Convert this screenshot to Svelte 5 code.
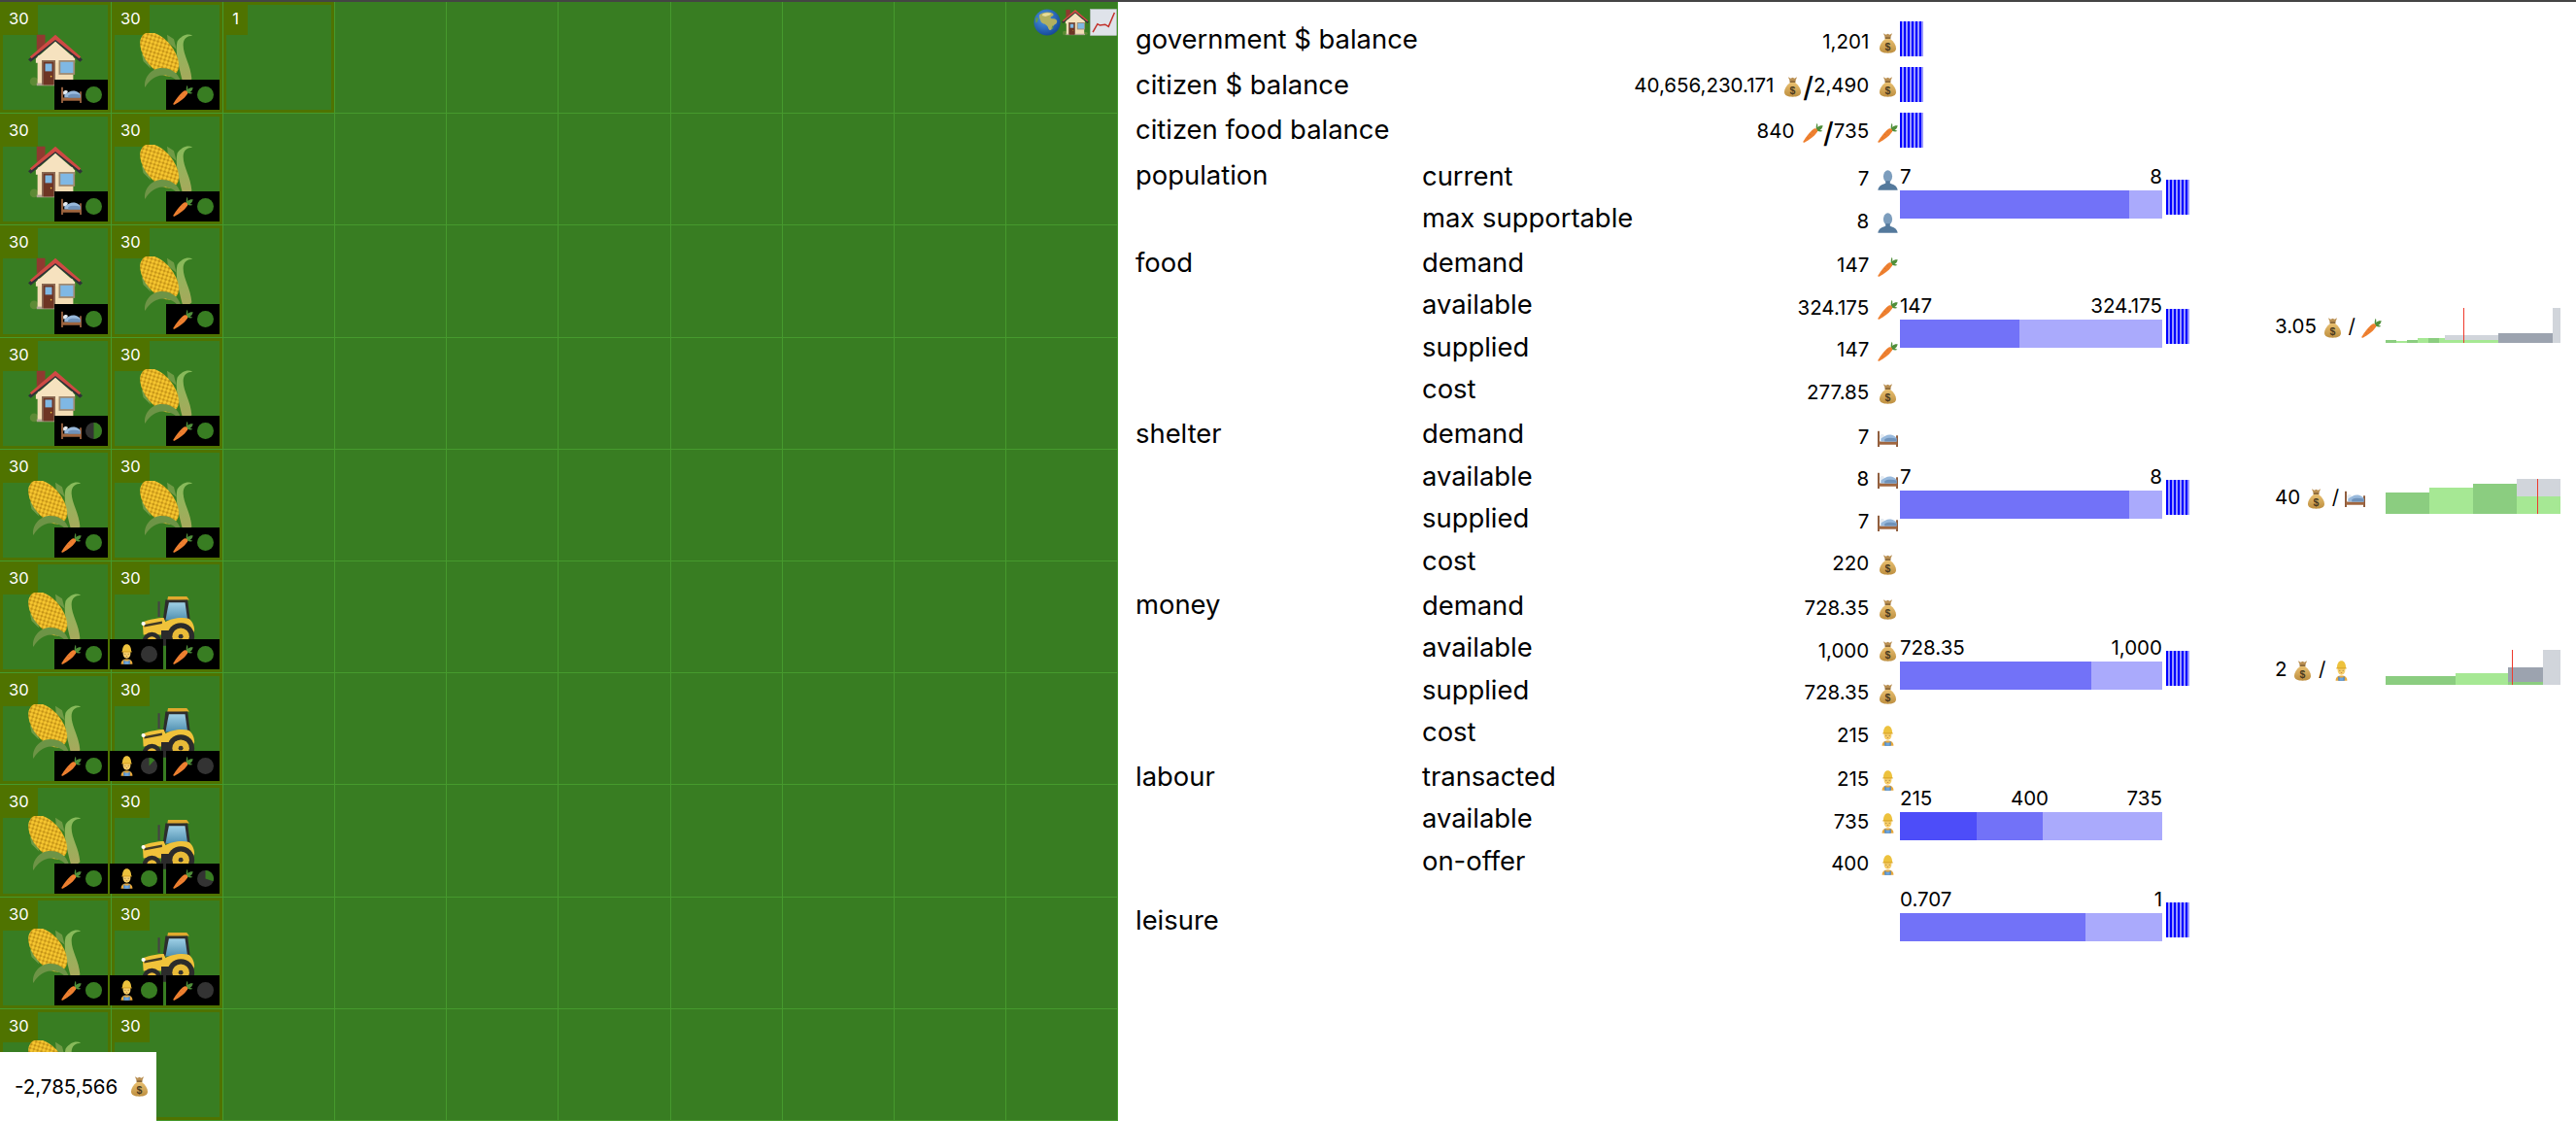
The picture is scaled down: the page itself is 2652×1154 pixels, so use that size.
<script>
	const B = (kind, chips, n = '30') => ({ kind, chips, n });
	const rows = [
		[B('house', [['bed', 1]]), B('corn', [['carrot', 1]]), { kind: '', chips: [], n: '1' }],
		[B('house', [['bed', 1]]), B('corn', [['carrot', 1]])],
		[B('house', [['bed', 1]]), B('corn', [['carrot', 1]])],
		[B('house', [['bed', 0.5]]), B('corn', [['carrot', 1]])],
		[B('corn', [['carrot', 1]]), B('corn', [['carrot', 1]])],
		[B('corn', [['carrot', 1]]), B('tractor', [['worker', 0], ['carrot', 1]])],
		[B('corn', [['carrot', 1]]), B('tractor', [['worker', 0.12], ['carrot', 0]])],
		[B('corn', [['carrot', 1]]), B('tractor', [['worker', 1], ['carrot', 0.3]])],
		[B('corn', [['carrot', 1]]), B('tractor', [['worker', 1], ['carrot', 0]])],
		[B('corn', []), { kind: '', chips: [], n: '30' }]
	];

	const cells = [];
	for (let r = 0; r < 10; r++) {
		for (let c = 0; c < 10; c++) {
			cells.push(rows[r][c] || null);
		}
	}

	// pie wedge from 12 o'clock, clockwise
	function wedge(p) {
		const a = p * Math.PI * 2;
		const x = 50 + 50 * Math.sin(a);
		const y = 50 - 50 * Math.cos(a);
		return `M50 50L50 0A50 50 0 ${p > 0.5 ? 1 : 0} 1 ${x} ${y}Z`;
	}

	const G1 = '#8bcd80';
	const G2 = '#a6e894';
	const GY = '#d1d5db';
	const DK = '#9ca3af';

	const foodChart = {
		rects: [
			[0, 11, 3, G1], [11, 11, 2, G2], [22, 11, 3, G1], [33, 11, 5, G2], [44, 11, 5, G1], [55, 6, 5, G2],
			[61, 55, 8, GY], [61, 55, 3, G2], [116, 56, 10, DK], [172, 8, 36, GY]
		],
		line: 80
	};
	const shelterChart = {
		rects: [
			[0, 45, 22, G1], [45, 45, 27, G2], [90, 45, 31, G1], [135, 45, 36, GY], [135, 45, 18, G2]
		],
		line: 156
	};
	const moneyChart = {
		rects: [
			[0, 72, 9, G1], [72, 54, 12, G2], [126, 36, 18, DK], [126, 36, 3, G1], [162, 18, 36, GY]
		],
		line: 130
	};

	const groups = [
		{ label: 'population', rows: [['current', '7', 'person'], ['max supportable', '8', 'person']], bar: { segs: [[87.5, '#7272f8']], labels: ['7', '8'] }, spark: true },
		{ label: 'food', rows: [['demand', '147', 'carrot'], ['available', '324.175', 'carrot'], ['supplied', '147', 'carrot'], ['cost', '277.85', 'bag']], bar: { segs: [[45.4, '#7272f8']], labels: ['147', '324.175'] }, spark: true, price: ['3.05', 'carrot'], chart: foodChart },
		{ label: 'shelter', rows: [['demand', '7', 'bed'], ['available', '8', 'bed'], ['supplied', '7', 'bed'], ['cost', '220', 'bag']], bar: { segs: [[87.5, '#7272f8']], labels: ['7', '8'] }, spark: true, price: ['40', 'bed'], chart: shelterChart },
		{ label: 'money', rows: [['demand', '728.35', 'bag'], ['available', '1,000', 'bag'], ['supplied', '728.35', 'bag'], ['cost', '215', 'worker']], bar: { segs: [[72.9, '#7272f8']], labels: ['728.35', '1,000'] }, spark: true, price: ['2', 'worker'], chart: moneyChart },
		{ label: 'labour', rows: [['transacted', '215', 'worker'], ['available', '735', 'worker'], ['on-offer', '400', 'worker']], bar: { segs: [[29.3, '#4d4df9'], [25.2, '#7272f8']], labels: ['215', '400', '735'] } },
		{ label: 'leisure', rows: [['', '', '']], bar: { segs: [[70.7, '#7272f8']], labels: ['0.707', '1'] }, spark: true, tall: true }
	];
</script>

{#snippet icon(name, cls = '')}
	<svg class="icon {cls}" viewBox="0 0 64 64"><use href="#i-{name}" /></svg>
{/snippet}

<svg class="defs" width="0" height="0" aria-hidden="true">
	<defs>
		<linearGradient id="bagg" x1="0" y1="0" x2="0" y2="1"><stop offset="0" stop-color="#e8bf70" /><stop offset="1" stop-color="#bd8f40" /></linearGradient>
		<radialGradient id="globeg" cx="0.4" cy="0.35" r="0.75"><stop offset="0" stop-color="#4f9be8" /><stop offset="1" stop-color="#0f3f8f" /></radialGradient>
		<linearGradient id="cabg" x1="0" y1="0" x2="0" y2="1"><stop offset="0" stop-color="#9fd0e6" /><stop offset="1" stop-color="#4f8fb0" /></linearGradient>
		<linearGradient id="huskg" x1="0" y1="0" x2="0" y2="1"><stop offset="0" stop-color="#86bb5a" /><stop offset="1" stop-color="#a8a85c" /></linearGradient>
		<pattern id="kern" width="4.6" height="4.6" patternUnits="userSpaceOnUse" patternTransform="rotate(-35)">
			<rect width="4.6" height="4.6" fill="#c08e14" />
			<circle cx="2.3" cy="2.3" r="2.1" fill="#f6c630" />
		</pattern>
		<symbol id="i-house" viewBox="0 0 64 64">
			<ellipse cx="7" cy="57" rx="5" ry="5" fill="#5d8a35" />
			<ellipse cx="56" cy="58" rx="5" ry="3" fill="#5d8a35" />
			<rect x="10" y="2" width="10" height="18" fill="#8f3a30" />
			<rect x="11" y="26" width="42" height="34" fill="#f3dcb4" />
			<rect x="10" y="59" width="45" height="3" fill="#b3a594" />
			<path d="M0 31 32 4l32 27-3 3L32 10 3 34Z" fill="#2f3238" />
			<path d="M2 28 32 2l30 26-2 2L32 8 4 30Z" fill="#cf4a44" />
			<path d="M9 30 32 10l23 20v5H9Z" fill="#f6e2bf" />
			<rect x="16" y="32" width="16" height="29" fill="#8a6a54" />
			<rect x="18" y="34" width="12" height="27" fill="#6e3524" />
			<rect x="20" y="36" width="8" height="9" fill="#7fb8e4" />
			<rect x="36" y="32" width="19" height="17" fill="#a08a70" />
			<rect x="38" y="34" width="15" height="13" fill="#7fb8e4" />
			<circle cx="27" cy="51" r="0.9" fill="#f0c040" />
		</symbol>
		<symbol id="i-corn" viewBox="0 0 64 64">
			<path d="M32 2l8 5 3 12-10-8Z" fill="#6f9a45" />
			<path d="M2 24l7 5 4 13-9-9Z" fill="#6f9a45" />
			<path d="M44 10c5-7 12-10 18-7-6 0-11 3-11 11 0 12 9 24 10 40-3 3-7 4-11 2C46 40 41 22 44 10Z" fill="url(#huskg)" />
			<ellipse cx="23" cy="25" rx="17" ry="30" transform="rotate(-38 23 25)" fill="url(#kern)" />
			<path d="M6 64c-2-11 7-23 20-23 10 0 19 5 22 16l-3 1c-6-8-17-10-25-7-7 3-11 8-14 13Z" fill="#6d9446" />
		</symbol>
		<symbol id="i-tractor" viewBox="0 0 64 64">
			<rect x="20" y="6" width="2.5" height="18" fill="#444" />
			<path d="M32 0h22l3 4-26 1Z" fill="#e0a92e" />
			<path d="M29 4h26l3 24H26Z" fill="#2d2d2d" />
			<path d="M33 7h19l3 21H29Z" fill="url(#cabg)" />
			<path d="M2 30c8-3 18-5 25-5l2 5c6-4 18-6 27-4 4 2 7 8 7 14l-2 5H3Z" fill="#f0c23a" />
			<path d="M4 33l21-4v3L4 36Z" fill="#403a26" />
			<circle cx="3" cy="32" r="2.4" fill="#fff" />
			<rect x="24" y="40" width="16" height="18" fill="#2b2b2b" />
			<circle cx="47" cy="47" r="16" fill="#2b2b2b" />
			<circle cx="47" cy="47" r="10" fill="#e9bb38" />
			<circle cx="47" cy="47" r="2.8" fill="#333" />
			<circle cx="13" cy="53" r="11" fill="#2b2b2b" />
			<circle cx="13" cy="53" r="6" fill="#e9bb38" />
			<circle cx="13" cy="53" r="2" fill="#333" />
		</symbol>
		<symbol id="i-bed" viewBox="0 0 64 64">
			<rect x="0" y="8" width="6" height="50" rx="1" fill="#8f5c3c" />
			<rect x="58" y="22" width="6" height="36" rx="1" fill="#8f5c3c" />
			<rect x="3" y="41" width="58" height="10" fill="#a0663f" />
			<path d="M6 24c3-6 11-7 15-3l-3 9-11 2Z" fill="#e6ebf1" />
			<path d="M10 41V32c11-8 21-14 32-12 10 2 17 7 18 13v8Z" fill="#98b9dc" />
			<path d="M22 41V34c8-5 25-6 38-1v8Z" fill="#6f92ba" />
		</symbol>
		<symbol id="i-carrot" viewBox="0 0 64 64">
			<path d="M45 2c2 3 2 9 1 13 4-4 11-6 17-5-1 7-5 12-10 14 3 0 7 1 9 3-3 3-10 3-16 0-6-4-5-18-1-25Z" fill="#4f8f3a" />
			<path d="M37 19c6-1 10 3 9 9C42 38 21 55 5 63c-3 1-4-1-4-3C11 44 27 23 37 19Z" fill="#ee8030" />
			<path d="M21 37l5 3M29 28l4 3M14 48l4 2" stroke="#c96420" stroke-width="1.4" fill="none" />
		</symbol>
		<symbol id="i-bag" viewBox="0 0 64 64">
			<path d="M18 1l8 4 6-3 6 3 8-4-6 14H24Z" fill="#b98f52" />
			<rect x="23" y="13" width="18" height="5" rx="1" fill="#8c6a3a" />
			<path d="M24 18h16c11 9 18 20 18 30 0 11-11 15-26 15S6 59 6 48c0-10 7-21 18-30Z" fill="url(#bagg)" />
			<text x="32" y="54" text-anchor="middle" font-family="Liberation Sans" font-size="32" font-weight="700" fill="#4a3a20">$</text>
		</symbol>
		<symbol id="i-person" viewBox="0 0 64 64">
			<ellipse cx="32" cy="20" rx="14" ry="19" fill="#7c9dbd" />
			<path d="M25 34h14v8c11 3 22 8 24 21H1c2-13 13-18 24-21Z" fill="#54799c" />
		</symbol>
		<symbol id="i-worker" viewBox="0 0 64 64">
			<path d="M14 63c0-10 5-16 18-16s18 6 18 16Z" fill="#e8a93c" />
			<path d="M22 63V50h4v4h12v-4h4v13Z" fill="#4d86c4" />
			<rect x="26" y="54" width="12" height="9" fill="#6aa4de" />
			<ellipse cx="32" cy="30" rx="12" ry="15" fill="#f5cd68" />
			<circle cx="27" cy="31" r="1.5" fill="#5a4526" />
			<circle cx="37" cy="31" r="1.5" fill="#5a4526" />
			<ellipse cx="32" cy="38" rx="2.6" ry="1.3" fill="#c4763c" />
			<path d="M18 24C18 9 24 1 32 1s14 8 14 23Z" fill="#edc23d" />
			<rect x="16" y="22" width="32" height="4" rx="2" fill="#dba82b" />
		</symbol>
		<symbol id="i-globe" viewBox="0 0 64 64">
			<circle cx="32" cy="32" r="31" fill="url(#globeg)" />
			<path d="M14 14c8-6 20-8 30-4 4 2 4 6 0 7-3 1-5 3-3 6 4 1 9 0 13 3 3 3 1 9-4 11-4 2-5 7-8 12-2 2-6 1-7-3-1-5-5-7-8-10-4-1-9-3-10-7-1-5-5-8-3-15Z" fill="#b2b060" />
			<path d="M22 12c6-3 14-3 20-1l-4 4-10 3-8-2Z" fill="#e8dc9a" />
			<path d="M5 22c3-2 6-2 6 2 0 5-3 9-6 9Z" fill="#5f9a52" />
			<path d="M44 40c3 0 3 5 1 8l-3-1Z" fill="#5f9a52" />
		</symbol>
		<symbol id="i-chart" viewBox="0 0 64 64">
			<rect x="1" y="1" width="62" height="62" fill="#dfe3ea" stroke="#b9bec6" />
			<path d="M7 55 18 36l6 3 12-2 8 5L58 9" fill="none" stroke="#c2302a" stroke-width="3.4" />
		</symbol>
	</defs>
</svg>

<div class="page">
	<div class="canvas">
		{#each cells as cell}
			<div class="cell">
				{#if cell}
					<div class="plot">
						<span class="count">{cell.n}</span>
						{#if cell.kind}
							<span class="big big-{cell.kind}">{@render icon(cell.kind)}</span>
						{/if}
						{#if cell.chips.length}
							<div class="chips">
								{#each cell.chips as chip}
									<div class="chip">
										{@render icon(chip[0], 'chip-ic')}
										<svg class="pie" viewBox="0 0 100 100">
											<circle cx="50" cy="50" r="50" fill={chip[1] === 1 ? '#387d22' : '#333333'} />
											{#if chip[1] > 0 && chip[1] < 1}
												<path d={wedge(chip[1])} fill="#387d22" />
											{/if}
										</svg>
									</div>
								{/each}
							</div>
						{/if}
					</div>
				{/if}
			</div>
		{/each}
		<div class="views">
			{@render icon('globe', 'view')}
			{@render icon('house', 'view')}
			{@render icon('chart', 'view')}
		</div>
		<div class="funds">-2,785,566 {@render icon('bag', 'val-ic')}</div>
	</div>

	<div class="stats">
		<div class="balance">
			<span class="lab">government $ balance</span>
			<span class="val">1,201 {@render icon('bag', 'val-ic')}</span>
			<span class="spark"></span>
		</div>
		<div class="balance">
			<span class="lab">citizen $ balance</span>
			<span class="val">40,656,230.171 {@render icon('bag', 'val-ic')}<b class="sl">/</b>2,490 {@render icon('bag', 'val-ic')}</span>
			<span class="spark"></span>
		</div>
		<div class="balance">
			<span class="lab">citizen food balance</span>
			<span class="val">840 {@render icon('carrot', 'val-ic')}<b class="sl">/</b>735 {@render icon('carrot', 'val-ic')}</span>
			<span class="spark"></span>
		</div>

		{#each groups as g}
			<div class="group" class:tall={g.tall}>
				<div class="lab glab">{g.label}</div>
				<div class="lines">
					{#each g.rows as row}
						<div class="line">
							<span class="lab">{row[0]}</span>
							{#if row[1]}
								<span class="val">{row[1]} {@render icon(row[2], 'val-ic')}</span>
							{/if}
						</div>
					{/each}
				</div>
				<div class="barbox">
					<div class="barlabels">
						{#each g.bar.labels as t}<span>{t}</span>{/each}
					</div>
					<div class="bar">
						{#each g.bar.segs as s}
							<i style="width:{s[0]}%;background:{s[1]}"></i>
						{/each}
					</div>
				</div>
				<div class="sparkcell">
					{#if g.spark}<span class="spark"></span>{/if}
				</div>
				<div class="price">
					{#if g.price}{g.price[0]} {@render icon('bag', 'val-ic')} / {@render icon(g.price[1], 'val-ic')}{/if}
				</div>
				<div class="chartcell">
					{#if g.chart}
						<svg width="180" height="36" viewBox="0 0 180 36">
							{#each g.chart.rects as r}
								<rect x={r[0]} y={36 - r[2]} width={r[1]} height={r[2]} fill={r[3]} />
							{/each}
							<rect x={g.chart.line} y="0" width="1" height="36" fill="#ef3a2c" />
						</svg>
					{/if}
				</div>
			</div>
		{/each}
	</div>
</div>

<style>
	:global(body) {
		margin: 0;
		background: #fff;
	}
	.defs {
		position: absolute;
	}
	.page {
		display: flex;
		width: 2652px;
		height: 1154px;
		overflow: hidden;
		border-top: 2px solid #444;
		box-sizing: border-box;
		font-family: Inter, 'Liberation Sans', sans-serif;
		color: #000;
	}
	.canvas {
		position: relative;
		flex: none;
		width: 1151px;
		height: 1152px;
		background: #387d22;
		display: grid;
		grid-template-columns: repeat(10, 1fr);
		grid-template-rows: repeat(10, 1fr);
	}
	.cell {
		position: relative;
		box-sizing: border-box;
		border-right: 1px solid #469a2d;
		border-bottom: 1px solid #469a2d;
	}
	.plot {
		position: absolute;
		inset: 0;
		box-sizing: border-box;
		border: 3px solid #4f7300;
	}
	.count {
		position: absolute;
		left: -3px;
		top: -3px;
		background: #4f7300;
		color: #fff;
		font-size: 16.5px;
		line-height: 34px;
		padding: 0 9px;
		height: 34px;
	}
	.big {
		position: absolute;
		display: block;
		width: 56px;
		height: 56px;
		left: 26px;
		top: 29px;
	}
	.big-tractor {
		top: 33px;
		left: 27px;
	}
	.big .icon {
		width: 56px;
		height: 56px;
		display: block;
	}
	.chips {
		position: absolute;
		right: 0;
		bottom: 0;
		display: flex;
		gap: 3px;
	}
	.chip {
		width: 55px;
		height: 31px;
		background: #000;
		display: flex;
		align-items: center;
		padding-left: 7px;
		box-sizing: border-box;
		gap: 4px;
	}
	.chip :global(.chip-ic) {
		width: 21px;
		height: 21px;
		flex: none;
	}
	.pie {
		width: 17px;
		height: 17px;
		flex: none;
	}
	.views {
		position: absolute;
		top: 7px;
		right: 1px;
		display: flex;
		gap: 1px;
	}
	.views :global(.view) {
		width: 28px;
		height: 28px;
	}
	.funds {
		position: absolute;
		left: 0;
		bottom: 0;
		width: 161px;
		height: 71px;
		box-sizing: border-box;
		padding-left: 15px;
		background: #fff;
		display: flex;
		align-items: center;
		gap: 9px;
		font-size: 20.5px;
	}
	.icon {
		display: inline-block;
		vertical-align: middle;
	}
	:global(.val-ic) {
		width: 21px;
		height: 21px;
		margin-left: 3px;
	}
	.stats {
		flex: 1;
		padding: 15px 0 0 18px;
		min-width: 0;
	}
	.lab {
		font-size: 27.4px;
		line-height: 43px;
	}
	.balance {
		display: grid;
		grid-template-columns: 300px 487px 24px;
		align-items: center;
		height: 46.7px;
	}
	.val {
		font-size: 20.5px;
		text-align: right;
		white-space: nowrap;
		padding-top: 5px;
		padding-right: 2px;
	}
	.balance .val {
		grid-column: 2;
	}
	.sl {
		font-weight: 500;
		font-size: 29px;
		vertical-align: middle;
	}
	.spark {
		display: block;
		width: 24px;
		height: 36px;
		background: repeating-linear-gradient(90deg, #0000ff 0 2.5px, #9999ff 2.5px 4px);
	}
	.group {
		display: grid;
		grid-template-columns: 295px 492px 270px 4px 24px 88px 114px 180px;
		margin-top: 2.3px;
		align-items: center;
	}
	.tall {
		margin-top: 0;
		min-height: 78px;
	}
	.glab {
		align-self: start;
	}
	.tall .glab {
		align-self: center;
	}
	.lines {
		grid-column: 2;
		display: flex;
		flex-direction: column;
	}
	.line {
		display: flex;
		justify-content: space-between;
		height: 43.5px;
		align-items: center;
	}
	.barbox {
		grid-column: 3;
		height: 44px;
		display: flex;
		flex-direction: column;
		justify-content: flex-end;
	}
	.barlabels {
		display: flex;
		justify-content: space-between;
		font-size: 20.5px;
		line-height: 22px;
		margin-bottom: 3px;
		flex: none;
	}
	.bar {
		height: 29px;
		flex: none;
		background: #aaaafc;
		display: flex;
	}
	.bar i {
		display: block;
		height: 100%;
	}
	.sparkcell {
		grid-column: 5;
	}
	.group > .price {
		grid-column: 6 / span 2;
		padding-left: 88px;
		font-size: 20.5px;
		white-space: nowrap;
	}
	.price :global(.val-ic) {
		margin-left: 0;
	}
	.chartcell {
		grid-column: 8;
		height: 36px;
		margin-top: -2px;
	}
	.chartcell svg {
		display: block;
	}
</style>
